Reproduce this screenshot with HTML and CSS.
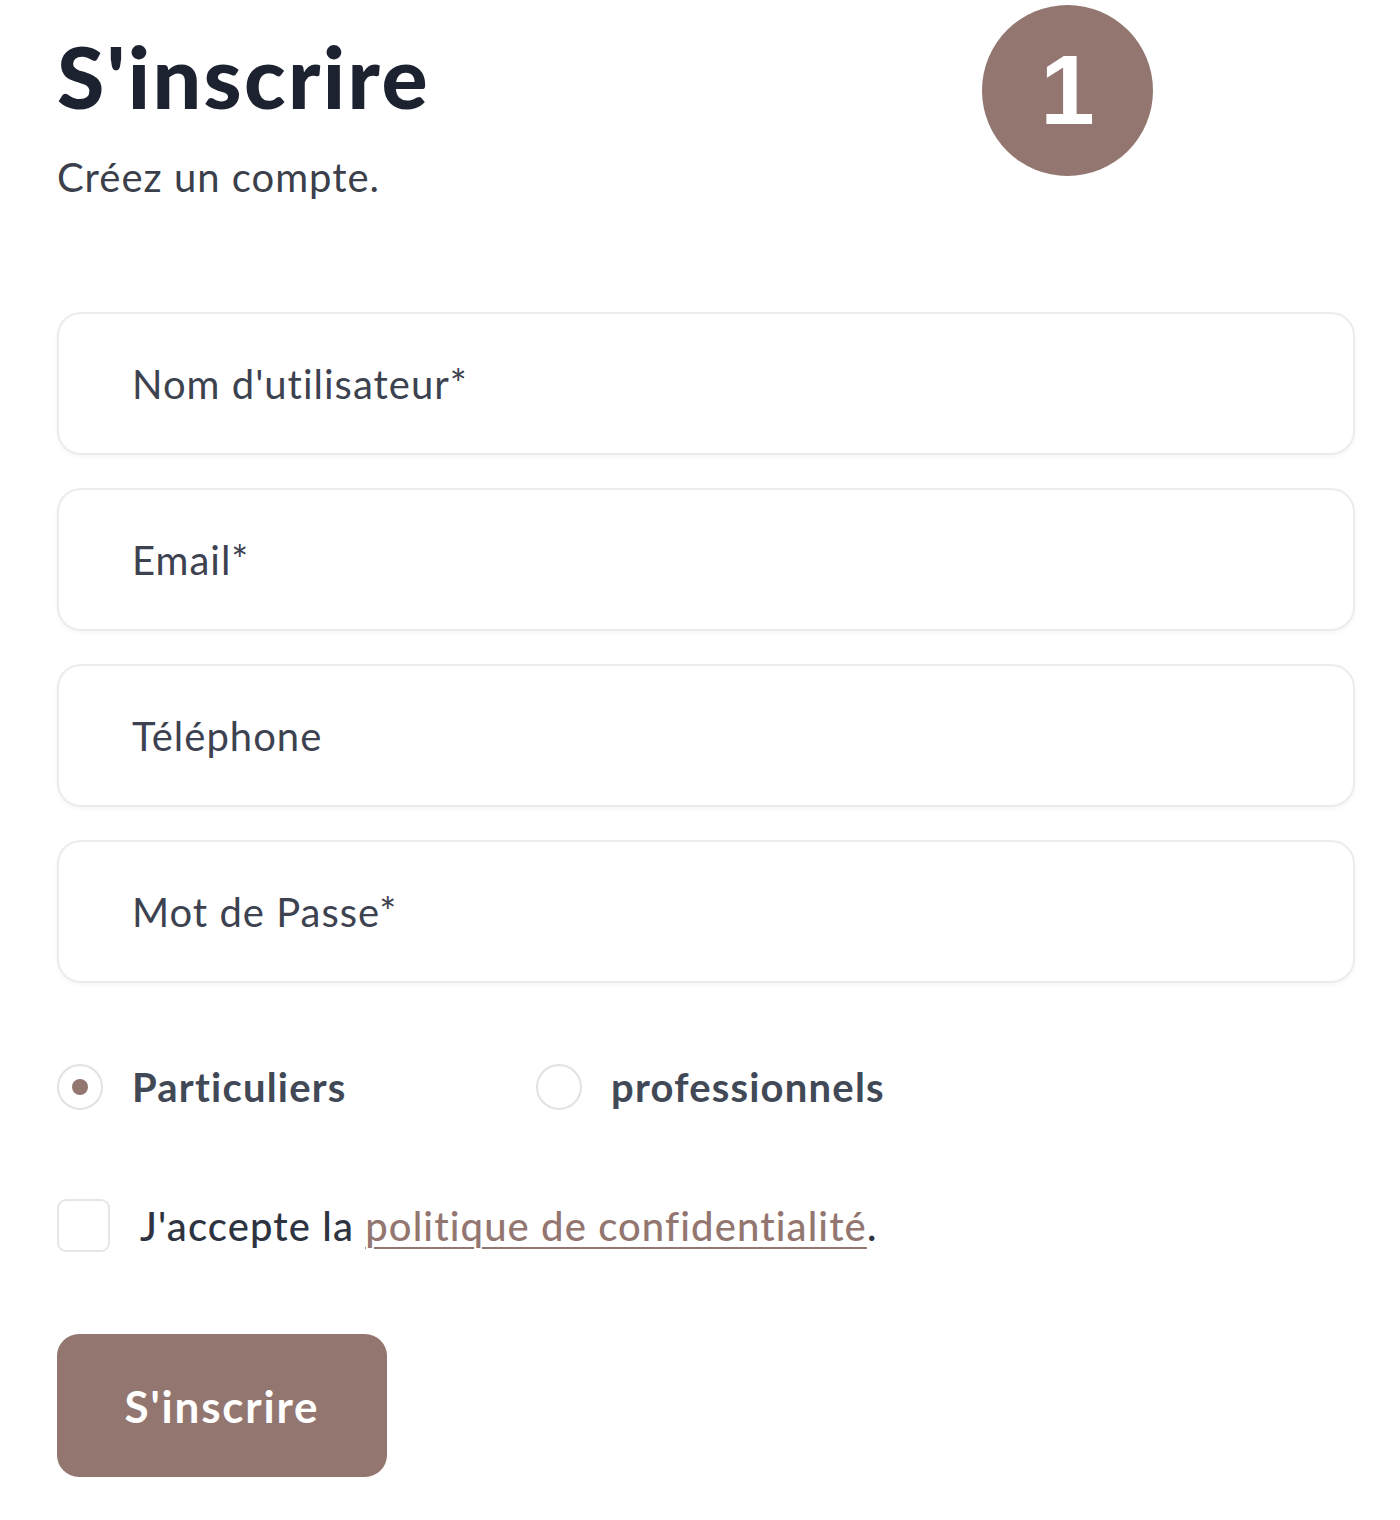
FILE: index.html
```html
<!DOCTYPE html>
<html lang="fr">
<head>
<meta charset="utf-8">
<title>S'inscrire</title>
<link rel="stylesheet" href="styles.css">
</head>
<body>
<div class="page">
  <header class="head">
    <div class="titles">
      <h1 class="title">S'inscrire</h1>
      <p class="subtitle">Créez un compte.</p>
    </div>
    <div class="step">1</div>
  </header>
  <form class="form">
    <div class="field"><input class="input" type="text" placeholder="Nom d'utilisateur*"></div>
    <div class="field"><input class="input" type="email" placeholder="Email*"></div>
    <div class="field"><input class="input" type="tel" placeholder="Téléphone"></div>
    <div class="field"><input class="input" type="password" placeholder="Mot de Passe*"></div>
    <div class="radios">
      <label class="radio"><span class="dot checked"></span><span class="rlabel">Particuliers</span></label>
      <label class="radio"><span class="dot"></span><span class="rlabel">professionnels</span></label>
    </div>
    <label class="accept"><span class="box"></span><span class="atext">J'accepte la <a class="link" href="#">politique de confidentialité</a>.</span></label>
    <button class="submit" type="button">S'inscrire</button>
  </form>
</div>
</body>
</html>
```
FILE: styles.css
```css
html, body { margin: 0; background: #ffffff; }
body { font-family: Lato, "Noto Sans", sans-serif; color: #3a3f4b; }
.page { width: 1298px; padding: 0 0 0 57px; }
.head { display: flex; position: relative; height: 276px; }
.titles { display: flex; flex-direction: column; }
.title { margin: 28px 0 0 0; font-size: 86px; line-height: 96px; font-weight: 900; color: #1c2230; letter-spacing: 2.4px; }
.subtitle { margin: 29px 0 0 0; font-size: 40px; line-height: 48px; color: #3a3f4b; letter-spacing: 1px; }
.step { position: absolute; left: 925px; top: 5px; width: 171px; height: 171px; border-radius: 50%; background: #937670; color: #fff; font-family: "Liberation Sans", Arial, sans-serif; font-weight: 700; font-size: 98px; display: flex; align-items: center; justify-content: center; }
.form { display: flex; flex-direction: column; }
.field { margin: 36px 0 0 0; }
.field + .field { margin-top: 33px; }
.input { box-sizing: border-box; width: 1298px; height: 143px; border: 2px solid #ececec; border-radius: 24px; box-shadow: 0 2px 4px rgba(0,0,0,0.04); padding: 0 0 0 73px; font-family: Lato, "Noto Sans", sans-serif; font-size: 40px; letter-spacing: 1px; color: #3a3f4b; background: #fff; outline: none; display: block; }
.input::placeholder { color: #3d4250; }
.radios { display: flex; margin-top: 80px; height: 48px; align-items: center; }
.radio { display: flex; align-items: center; width: 479px; }
.dot { box-sizing: border-box; width: 46px; height: 46px; border: 2px solid #e2e2e2; border-radius: 50%; display: flex; align-items: center; justify-content: center; margin-right: 29px; }
.dot.checked::after { content: ""; width: 16px; height: 16px; border-radius: 50%; background: #937670; }
.rlabel { font-size: 40px; font-weight: 700; color: #414957; letter-spacing: 1.2px; }
.accept { display: flex; align-items: center; margin-top: 88px; }
.box { box-sizing: border-box; width: 53px; height: 53px; border: 2px solid #e6e6e6; border-radius: 9px; margin-right: 30px; }
.atext { font-size: 40px; color: #2d3340; font-weight: 500; letter-spacing: 1.1px; }
.link { color: #937670; text-decoration: underline; text-decoration-thickness: 2px; text-underline-offset: 6px; }
.submit { margin-top: 82px; width: 330px; height: 143px; border: none; border-radius: 22px; background: #937670; color: #fff; font-family: Lato, "Noto Sans", sans-serif; font-size: 44px; font-weight: 700; letter-spacing: 1.8px; cursor: pointer; }
```
